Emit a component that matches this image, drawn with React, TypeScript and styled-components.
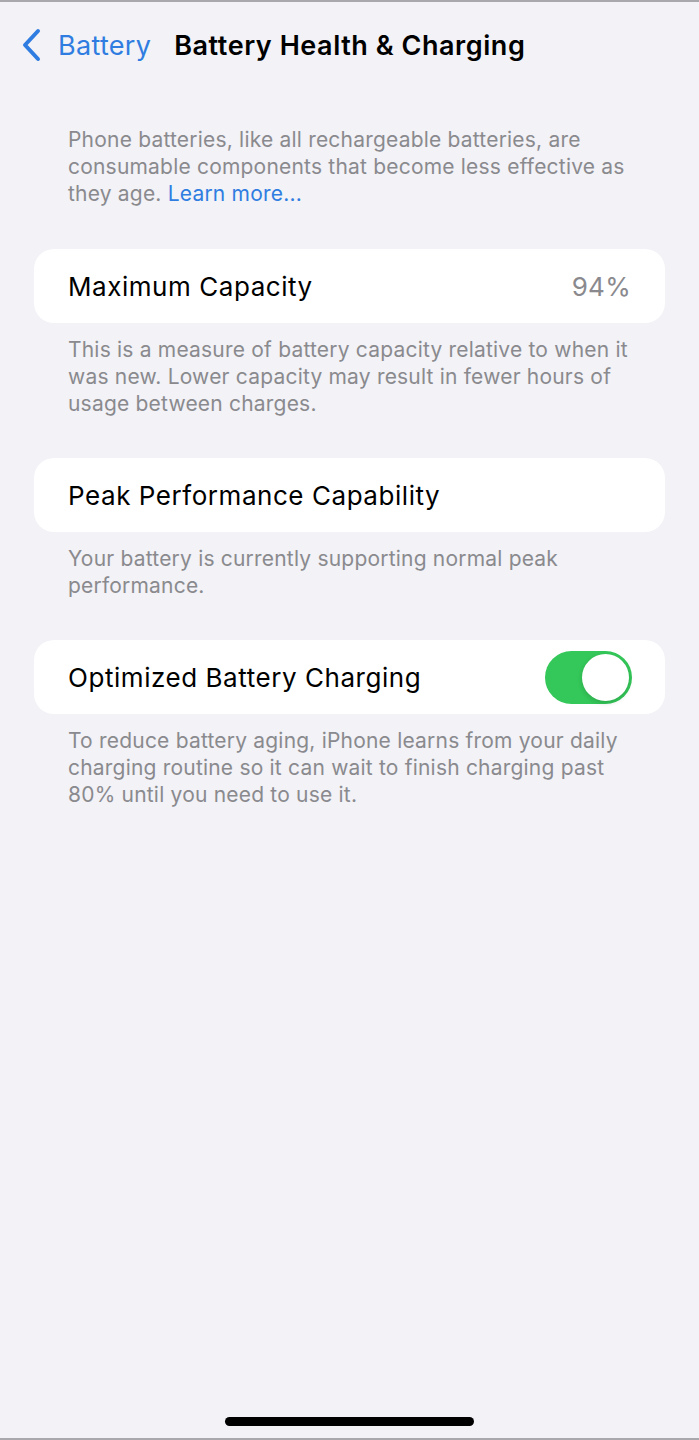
import React, { useState } from 'react';
import styled, { createGlobalStyle } from 'styled-components';

const GlobalStyle = createGlobalStyle`
  html, body {
    margin: 0;
    padding: 0;
    background-color: #f2f2f7;
  }
  body {
    font-family: Inter, "Liberation Sans", Arial, sans-serif;
    -webkit-font-smoothing: antialiased;
  }
`;

type Section = {
  title: string;
  value?: string;
  toggle?: boolean;
  footer: string;
};

const sections: Section[] = [
  {
    title: 'Maximum Capacity',
    value: '94%',
    footer:
      'This is a measure of battery capacity relative to when it was new. Lower capacity may result in fewer hours of usage between charges.'
  },
  {
    title: 'Peak Performance Capability',
    footer: 'Your battery is currently supporting normal peak performance.'
  },
  {
    title: 'Optimized Battery Charging',
    toggle: true,
    footer:
      'To reduce battery aging, iPhone learns from your daily charging routine so it can wait to finish charging past 80% until you need to use it.'
  }
];

function ChevronLeft() {
  return (
    <svg width='22' height='34' viewBox='0 0 22 34' fill='none'>
      <path
        d='M18 3 L5 17 L18 31'
        stroke='#2f7de1'
        strokeWidth='4'
        strokeLinecap='round'
        strokeLinejoin='round'
      />
    </svg>
  );
}

function App() {
  const [optimized, setOptimized] = useState(true);

  return (
    <Screen>
      <GlobalStyle />
      <NavBar>
        <BackButton>
          <ChevronLeft />
          <BackLabel>Battery</BackLabel>
        </BackButton>
        <NavTitle>Battery Health &amp; Charging</NavTitle>
      </NavBar>

      <Intro>
        Phone batteries, like all rechargeable batteries, are consumable
        components that become less effective as they age.{' '}
        <LearnMore>Learn more...</LearnMore>
      </Intro>

      {sections.map((section) => (
        <React.Fragment key={section.title}>
          <Card>
            <CardTitle>{section.title}</CardTitle>
            {section.value && <CardValue>{section.value}</CardValue>}
            {section.toggle && (
              <Switch
                $on={optimized}
                onClick={() => setOptimized(!optimized)}
                aria-pressed={optimized}
              >
                <Knob $on={optimized} />
              </Switch>
            )}
          </Card>
          <Footer>{section.footer}</Footer>
        </React.Fragment>
      ))}

      <Spacer />
      <HomeBar />
    </Screen>
  );
}
export default App;

const Screen = styled.div`
  display: flex;
  flex-direction: column;
  box-sizing: border-box;
  width: 699px;
  height: 1440px;
  border-top: 2px solid #a9a9ad;
  border-bottom: 2px solid #a9a9ad;
  background-color: #f2f2f7;
  overflow: hidden;
`;

const NavBar = styled.div`
  display: flex;
  align-items: center;
  height: 86px;
  padding-left: 20px;
`;

const BackButton = styled.div`
  display: flex;
  align-items: center;
  gap: 16px;
  margin-right: 23px;
`;

const BackLabel = styled.span`
  color: #2f7de1;
  font-size: 27px;
  letter-spacing: 0.3px;
`;

const NavTitle = styled.h1`
  margin: 0;
  color: #000;
  font-size: 27px;
  font-weight: 600;
  letter-spacing: 0.55px;
`;

const Intro = styled.p`
  margin: 38px 0 1px;
  padding: 0 68px;
  color: #8a8a8e;
  font-size: 21px;
  line-height: 27px;
  letter-spacing: 0.2px;
`;

const LearnMore = styled.span`
  color: #2f7de1;
`;

const Card = styled.div`
  display: flex;
  align-items: center;
  justify-content: space-between;
  box-sizing: border-box;
  margin: 41px 34px 0;
  padding: 0 34px;
  height: 74px;
  background-color: #fff;
  border-radius: 20px;
`;

const CardTitle = styled.span`
  color: #000;
  font-size: 26px;
  letter-spacing: 0.55px;
`;

const CardValue = styled.span`
  color: #8a8a8e;
  font-size: 26px;
  letter-spacing: 0.3px;
`;

const Switch = styled.button<{ $on: boolean }>`
  display: flex;
  align-items: center;
  box-sizing: border-box;
  width: 87px;
  height: 53px;
  padding: 3px;
  margin-right: -1px;
  border: none;
  border-radius: 27px;
  background-color: ${(props) => (props.$on ? '#34c759' : '#e9e9ea')};
  justify-content: ${(props) => (props.$on ? 'flex-end' : 'flex-start')};
  cursor: pointer;
`;

const Knob = styled.span<{ $on: boolean }>`
  width: 47px;
  height: 47px;
  border-radius: 50%;
  background-color: #fff;
  box-shadow: 0 2px 5px rgba(0, 0, 0, 0.15);
`;

const Footer = styled.p`
  margin: 13px 0 0;
  padding: 0 68px;
  color: #8a8a8e;
  font-size: 21px;
  line-height: 27px;
  letter-spacing: 0.2px;
`;

const Spacer = styled.div`
  flex: 1;
`;

const HomeBar = styled.div`
  align-self: center;
  width: 249px;
  height: 9px;
  margin-bottom: 12px;
  border-radius: 5px;
  background-color: #000;
`;
